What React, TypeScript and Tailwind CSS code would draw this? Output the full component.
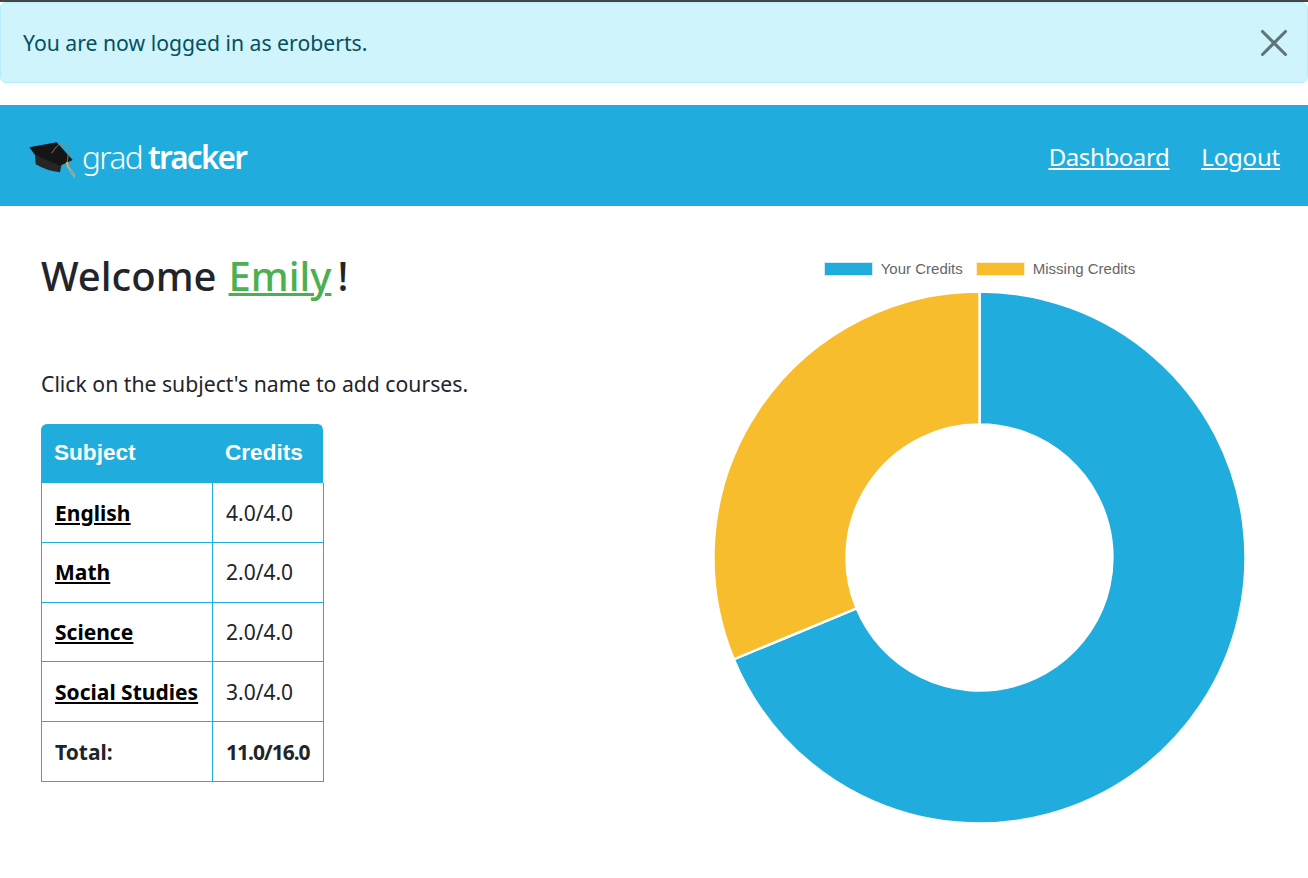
import React from "react";
import { X } from "lucide-react";

const rows = [
  { subject: "English", credits: "4.0/4.0" },
  { subject: "Math", credits: "2.0/4.0" },
  { subject: "Science", credits: "2.0/4.0" },
  { subject: "Social Studies", credits: "3.0/4.0" },
];

function Logo() {
  return (
    <div className="flex items-center">
      <svg width="48" height="40" viewBox="0 0 48 40" className="mt-[9px] shrink-0">
        <path d="M6 15 L6.7 24.3 Q18 31 31 32.3 L32.7 24 Z" fill="#262626" />
        <path d="M0.3 7.3 L27.7 2.3 L43.7 20 L31 25.7 L6 15 Z" fill="#151515" />
        <path d="M22.7 13.3 Q28 5 31 4.3 Q38 5 38.7 8.3 Q40 14 37.7 24.3" fill="none" stroke="#9c8462" strokeWidth="0.9" />
        <path d="M37.7 22 L39.5 28" fill="none" stroke="#f0a63c" strokeWidth="2" />
        <path d="M39 27 L42 33 L46 38 M39.5 27 L44 32 L46 36" fill="none" stroke="#b9a88a" strokeWidth="1.1" />
      </svg>
      <span className="ml-[5px] mt-[3px] flex items-baseline font-['Noto_Sans',sans-serif] text-[31.5px] leading-none text-white">
        <span className="font-light tracking-[-1.6px]">grad</span>
        <span className="ml-[6px] font-semibold tracking-[-1.8px]">tracker</span>
      </span>
    </div>
  );
}

function Donut() {
  return (
    <svg width="533" height="533" viewBox="0 0 533 533" className="block">
      <path
        d="M266.5 0.5 A266 266 0 1 1 20.75 368.3 L143.6 317.4 A133 133 0 1 0 266.5 133.5 Z"
        fill="#20addd"
        stroke="#ffffff"
        strokeWidth="2.4"
      />
      <path
        d="M20.75 368.3 A266 266 0 0 1 266.5 0.5 L266.5 133.5 A133 133 0 0 0 143.6 317.4 Z"
        fill="#f8bd2d"
        stroke="#ffffff"
        strokeWidth="2.4"
      />
    </svg>
  );
}

export default function App() {
  return (
    <div className="h-[878px] overflow-hidden bg-white font-['Noto_Sans',sans-serif] text-[#212529]">
      <div className="h-[2px] bg-[#444444]" />
      <div className="flex h-[81px] items-center justify-between rounded-[6px] border border-[#b6effb] bg-[#cff4fc] pl-[22px] pr-[10px] text-[21.2px] text-[#055160]">
        <span>You are now logged in as eroberts.</span>
        <X size={46} strokeWidth={1.6} className="text-[#5f7478]" />
      </div>

      <header className="mt-[22px] flex h-[101px] items-center justify-between bg-[#20addd] pl-[29px] pr-[28px]">
        <Logo />
        <nav className="mt-[2px] flex gap-[32px] text-[24px] text-white underline">
          <a href="#" className="tracking-[-0.4px]">Dashboard</a>
          <a href="#" className="tracking-[-0.2px]">Logout</a>
        </nav>
      </header>

      <main className="flex">
        <section className="flex-1 pl-[41px] pt-[42px]">
          <h1 className="flex text-[40px] font-medium leading-[56px]">
            <span>Welcome</span>
            <span className="ml-[12px] text-[#4caf50] underline decoration-[3px]">Emily</span>
            <span className="ml-[6px]">!</span>
          </h1>
          <p className="mt-[65px] text-[21.2px] leading-[30px]">Click on the subject's name to add courses.</p>
          <table className="mt-[25px] w-[283px] border-separate border-spacing-0 text-[21px]">
            <thead>
              <tr className="h-[59px] text-left font-['Liberation_Sans',sans-serif] text-[22.6px] font-bold text-white">
                <th className="w-[171px] rounded-tl-[6px] bg-[#20addd] pb-[2px] pl-[13px]">Subject</th>
                <th className="rounded-tr-[6px] border-r border-white bg-[#20addd] pb-[2px] pl-[13px]">Credits</th>
              </tr>
            </thead>
            <tbody>
              {rows.map((row) => (
                <tr key={row.subject} className="h-[59.8px]">
                  <td className="border-b border-l border-[#20addd] pl-[13px] pt-[2px] font-bold text-black underline">
                    <a href="#">{row.subject}</a>
                  </td>
                  <td className="border-x border-b border-[#20addd] pl-[13px] pt-[2px]">{row.credits}</td>
                </tr>
              ))}
              <tr className="h-[59.8px] font-bold">
                <td className="border-b border-l border-[#20addd] pl-[13px] pt-[2px]">Total:</td>
                <td className="border-x border-b border-[#20addd] pl-[13px] pt-[2px] tracking-[-1px]">11.0/16.0</td>
              </tr>
            </tbody>
          </table>
        </section>

        <section className="flex w-[654px] flex-col items-center pr-[3px] pt-[56px]">
          <div className="flex h-[14px] items-center gap-[8px] font-['Liberation_Sans',sans-serif] text-[15px] text-[#666666]">
            <span className="h-[14px] w-[49px] border border-[#cfeaf5] bg-[#20addd]" />
            <span className="mr-[5px]">Your Credits</span>
            <span className="h-[14px] w-[49px] border border-[#fdeecb] bg-[#f8bd2d]" />
            <span>Missing Credits</span>
          </div>
          <div className="mt-[15px]">
            <Donut />
          </div>
        </section>
      </main>
    </div>
  );
}
